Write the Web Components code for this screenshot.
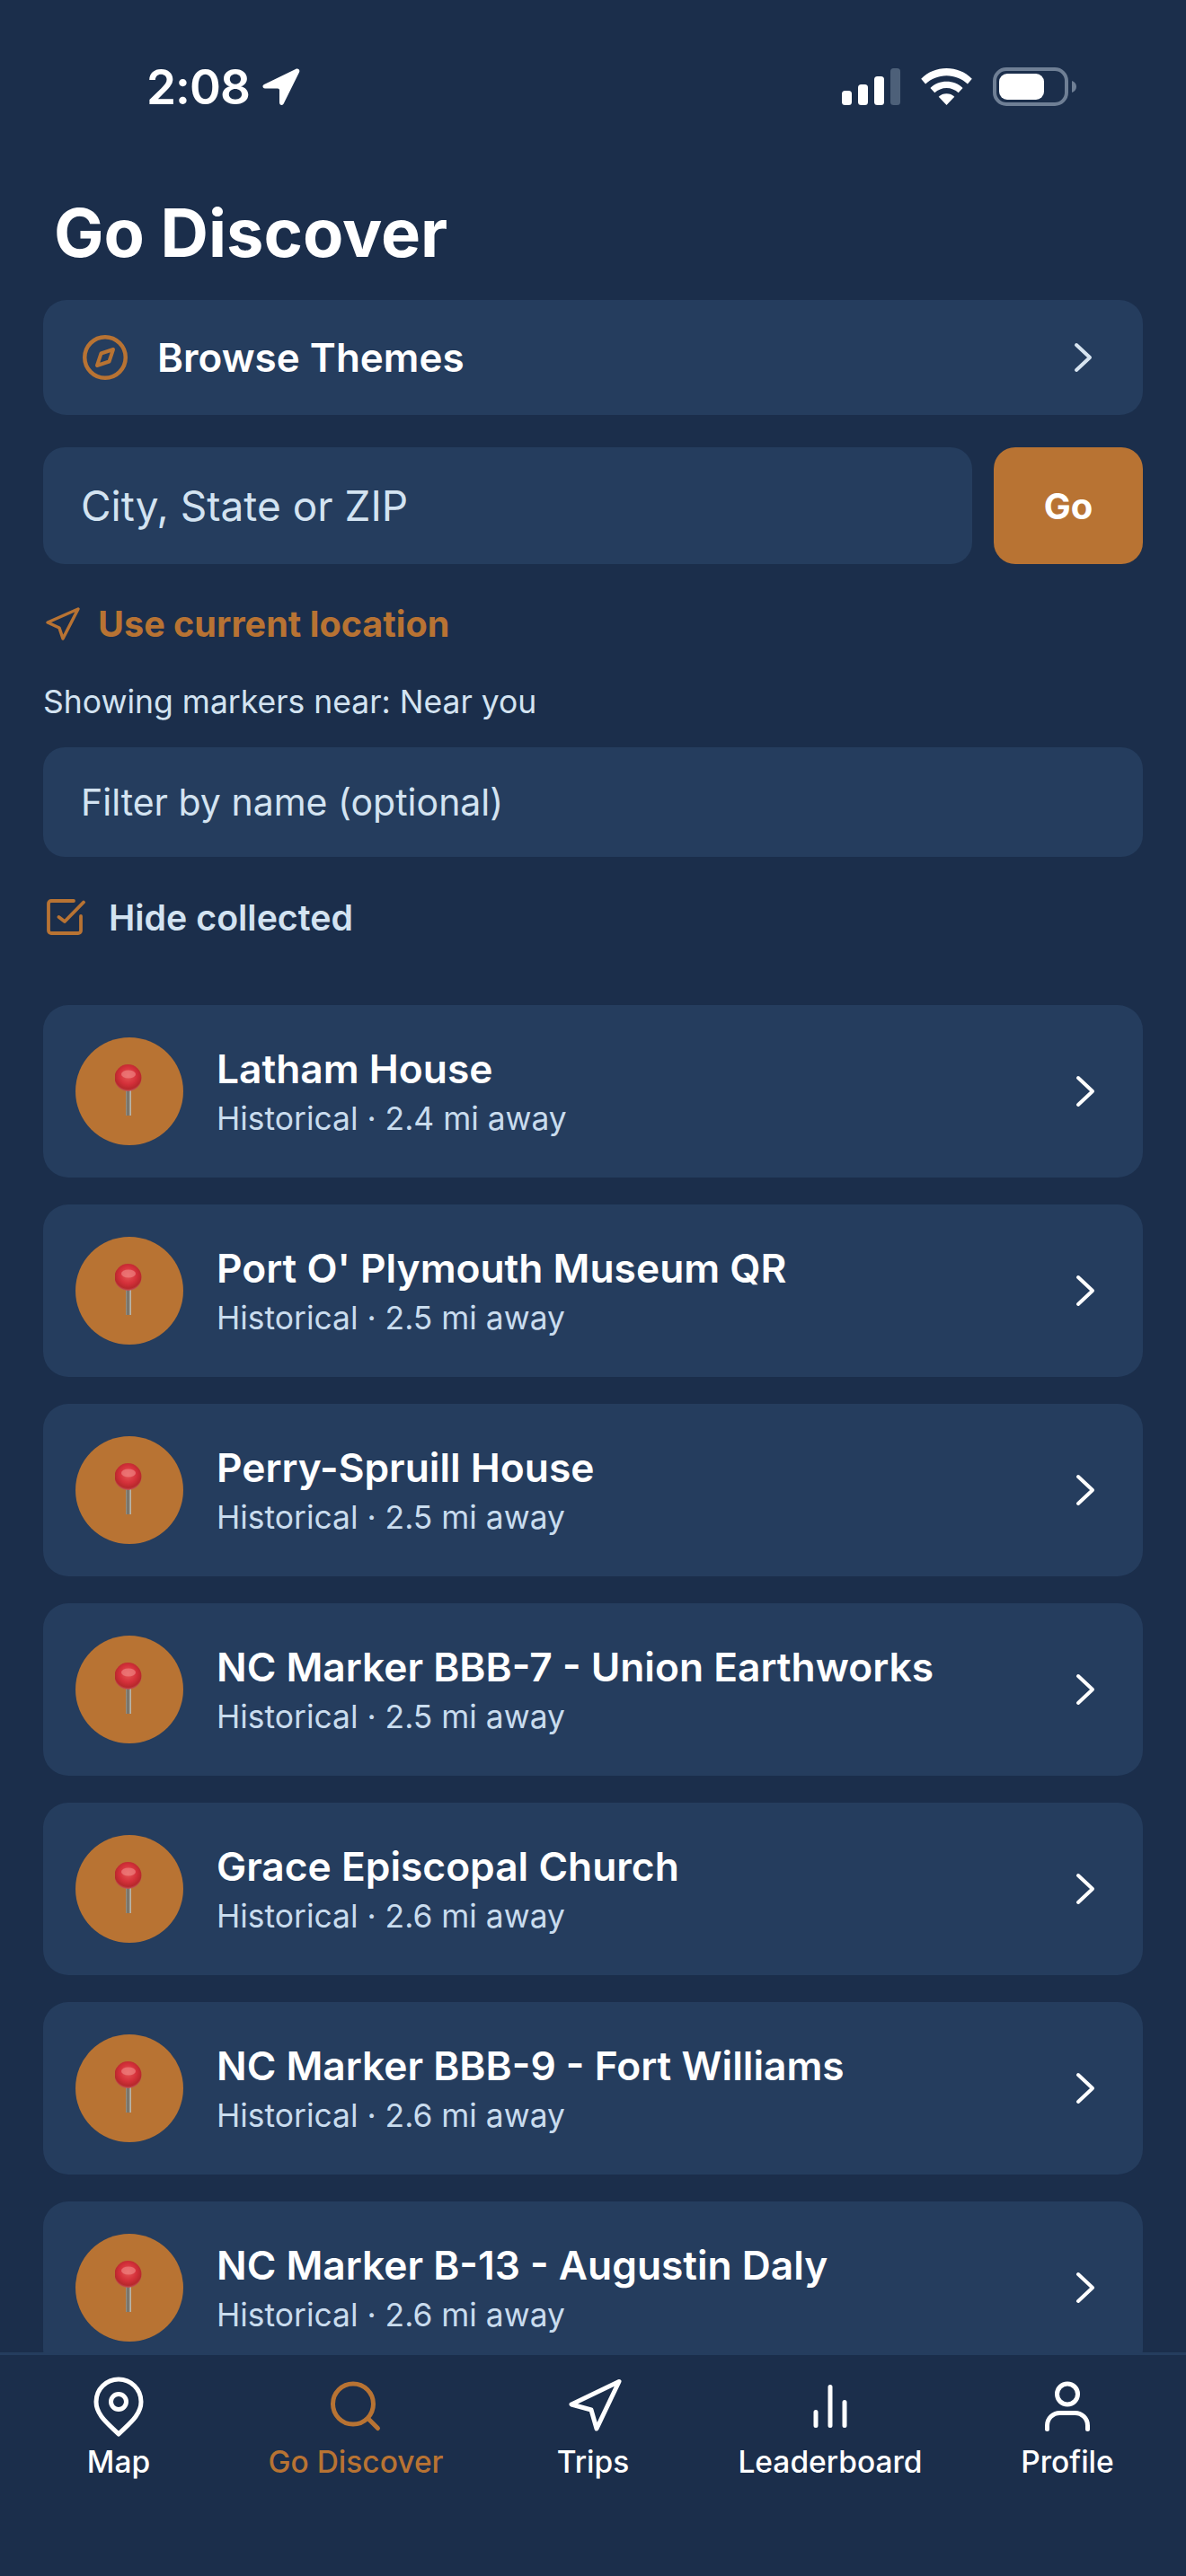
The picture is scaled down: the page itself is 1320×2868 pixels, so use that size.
<!DOCTYPE html>
<html>
<head>
<meta charset="utf-8">
<title>Go Discover</title>
<style>
  html, body { margin: 0; padding: 0; background: #1b2e4b; }
  body { font-family: Inter, "Liberation Sans", sans-serif; color: #fff; }
</style>
</head>
<body>
<discover-app></discover-app>

<script>
const ORANGE = '#b87333';

class StatusBar extends HTMLElement {
  constructor() {
    super();
    this.attachShadow({ mode: 'open' });
    this.shadowRoot.innerHTML = `<style>
      :host { display: flex; flex: none; align-items: center; justify-content: space-between; height: 111px; padding: 41px 122px 0 163px; }
      .time { display: flex; align-items: center; gap: 14px; font-size: 53px; font-weight: 600; line-height: 56px; letter-spacing: -1px; }
      .right { display: flex; align-items: center; gap: 23px; }
      svg { display: block; }
    </style>
    <div class="time"><span>2:08</span>
      <svg width="42" height="42" viewBox="0 0 42 42"><path d="M37 1 2 18c-2.500 1.200-1.800 4.500 1 4.500h14c1.300 0 2 .7 2 2V38c0 3.400 3.500 4 4.800 1.200L41 4.500C42.300 1.700 39.800-.3 37 1z" fill="#fff"/></svg>
    </div>
    <div class="right">
      <svg width="65" height="41" viewBox="0 0 65 41">
        <rect x="0" y="25" width="11" height="16" rx="3.500" fill="#fff"/>
        <rect x="18" y="18" width="11" height="23" rx="3.500" fill="#fff"/>
        <rect x="36" y="9" width="11" height="32" rx="3.500" fill="#fff"/>
        <rect x="54" y="0" width="11" height="41" rx="3.500" fill="#4d6079"/>
      </svg>
      <svg width="57" height="41" viewBox="0 0 58 42" fill="#fff">
        <path d="M29 0C18 0 8 4 0 12l5 6c6.500-6 15-9.500 24-9.500S46.500 12 53 18l5-6C50 4 40 0 29 0z"/>
        <path d="M29 15c-7 0-13.500 2.500-18.500 7.500l5 5.500C19 24.500 24 22.500 29 22.500s10 2 13.500 5.500l5-5.500C42.500 17.500 36 15 29 15z"/>
        <path d="M29 29c-3.500 0-6.500 1.200-9 3.500L29 42l9-9.500c-2.500-2.300-5.500-3.500-9-3.500z"/>
      </svg>
      <svg width="93" height="43" viewBox="0 0 93 43">
        <rect x="2" y="2" width="80" height="39" rx="13" fill="none" stroke="#6f7f95" stroke-width="4"/>
        <rect x="7" y="7" width="50" height="29" rx="9" fill="#fff"/>
        <path d="M88 15c3 1 5 3.500 5 6.500s-2 5.500-5 6.500z" fill="#6f7f95"/>
      </svg>
    </div>`;
  }
}

class BrowseRow extends HTMLElement {
  constructor() {
    super();
    this.attachShadow({ mode: 'open' });
    this.shadowRoot.innerHTML = `<style>
      :host { display: flex; align-items: center; height: 128px; padding: 0 54px 0 44px; background: var(--card); border-radius: 26px; }
      .label { flex: 1; margin-left: 33px; font-size: 44px; font-weight: 600; }
      svg { display: block; }
    </style>
    <svg width="50" height="50" viewBox="0 0 50 50" fill="none" stroke="${ORANGE}" stroke-width="4.500" stroke-linejoin="round">
      <circle cx="25" cy="25" r="22.750"/>
      <path d="M34 16 20.500 20.500 16 34l13.500-4.500z" stroke-width="4"/>
    </svg>
    <span class="label"><slot></slot></span>
    <svg width="24" height="34" viewBox="0 0 24 34" fill="none" stroke="#d7e4f0" stroke-width="4" stroke-linecap="round" stroke-linejoin="round"><path d="M4 3l15 14L4 31"/></svg>`;
  }
}

class TextField extends HTMLElement {
  constructor() {
    super();
    this.attachShadow({ mode: 'open' });
    this.shadowRoot.innerHTML = `<style>
      :host { display: flex; align-items: center; box-sizing: border-box; padding: 0 42px; background: var(--card); border-radius: 24px; color: #d3e3f1; font-size: 46px; }
    </style><slot></slot>`;
  }
}

class GoButton extends HTMLElement {
  constructor() {
    super();
    this.attachShadow({ mode: 'open' });
    this.shadowRoot.innerHTML = `<style>
      :host { display: flex; align-items: center; justify-content: center; background: ${ORANGE}; border-radius: 24px; font-size: 40px; font-weight: 700; color: #fff; }
    </style><slot></slot>`;
  }
}

class LocationLink extends HTMLElement {
  constructor() {
    super();
    this.attachShadow({ mode: 'open' });
    this.shadowRoot.innerHTML = `<style>
      :host { display: flex; align-items: center; gap: 19px; padding-left: 2px; color: ${ORANGE}; font-size: 39.600px; line-height: 48px; font-weight: 700; }
      svg { display: block; }
    </style>
    <svg width="40" height="40" viewBox="0 0 40 40" fill="none" stroke="${ORANGE}" stroke-width="3.500" stroke-linejoin="round" stroke-linecap="round"><path d="M37 3 3 18l13 6 4 12z"/></svg>
    <span><slot></slot></span>`;
  }
}

class HideToggle extends HTMLElement {
  constructor() {
    super();
    this.attachShadow({ mode: 'open' });
    this.shadowRoot.innerHTML = `<style>
      :host { display: flex; align-items: center; gap: 25px; padding-left: 4px; color: #d3e3f1; font-size: 39.300px; line-height: 47px; font-weight: 600; }
      svg { display: block; }
    </style>
    <svg width="44" height="42" viewBox="0 0 44 42" fill="none" stroke="${ORANGE}" stroke-width="3.800" stroke-linecap="round" stroke-linejoin="round">
      <path d="M38 19v16a3 3 0 0 1-3 3H5a3 3 0 0 1-3-3V5a3 3 0 0 1 3-3h25"/>
      <path d="M13.500 20l6.500 5L41 3.500"/>
    </svg>
    <span><slot></slot></span>`;
  }
}

class MarkerRow extends HTMLElement {
  constructor() {
    super();
    this.attachShadow({ mode: 'open' });
    const id = 'ball' + Math.random().toString(36).slice(2, 7);
    this.shadowRoot.innerHTML = `<style>
      :host { display: flex; align-items: center; flex: none; height: 192px; padding: 0 50px 0 36px; background: var(--card); border-radius: 28px; }
      .badge { flex: none; display: flex; align-items: center; justify-content: center; width: 120px; height: 120px; border-radius: 50%; background: ${ORANGE}; }
      .text { flex: 1; margin-left: 37px; }
      .name { font-size: 44.300px; font-weight: 600; line-height: 54px; color: #fff; }
      .sub { margin-top: 8px; font-size: 35.400px; line-height: 42px; color: #c9dcee; }
      svg { display: block; }
    </style>
    <div class="badge">
      <svg width="32" height="60" viewBox="0 0 32 60">
        <defs>
          <radialGradient id="${id}" cx=".5" cy=".42" r=".58">
            <stop offset="0" stop-color="#e65656"/>
            <stop offset=".55" stop-color="#d4303a"/>
            <stop offset=".85" stop-color="#b8282c"/>
            <stop offset="1" stop-color="#c4565a"/>
          </radialGradient>
          <linearGradient id="${id}s" x1="0" x2="1" y1="0" y2="0">
            <stop offset="0" stop-color="#9a9488"/>
            <stop offset=".45" stop-color="#6e695f"/>
            <stop offset="1" stop-color="#c9c3b5"/>
          </linearGradient>
        </defs>
        <rect x="12" y="28" width="6" height="29" fill="url(#${id}s)"/>
        <circle cx="14.500" cy="15" r="15" fill="url(#${id})"/>
        <ellipse cx="15" cy="11" rx="8" ry="4.500" fill="#f08684" opacity=".65"/>
      </svg>
    </div>
    <div class="text">
      <div class="name"><slot name="name"></slot></div>
      <div class="sub"><slot name="sub"></slot></div>
    </div>
    <svg width="26" height="36" viewBox="0 0 26 36" fill="none" stroke="#fff" stroke-width="4" stroke-linecap="round" stroke-linejoin="round"><path d="M4 3l16 15L4 33"/></svg>`;
  }
}

const TAB_ICONS = {
  map: '<path d="M61 30c0 15-14 25-25 36-11-11-25-21-25-36a25 25 0 0 1 50 0z"/><circle cx="36" cy="30" r="8.500"/>',
  search: '<circle cx="33" cy="32.500" r="22.500"/><path d="M50 49l10.500 10.500"/>',
  trips: '<path d="M65 7.500 12 33l22 6 6 21z"/>',
  board: '<path d="M20 41.500v15M36 13.500v43M52 30.500v26"/>',
  profile: '<circle cx="36" cy="21.500" r="11.500"/><path d="M13.500 60.500v-4a14 14 0 0 1 14-14h17a14 14 0 0 1 14 14v4"/>'
};

class TabItem extends HTMLElement {
  constructor() {
    super();
    this.attachShadow({ mode: 'open' });
    const active = this.hasAttribute('active');
    const colour = active ? ORANGE : '#fff';
    this.shadowRoot.innerHTML = `<style>
      :host { display: flex; flex-direction: column; align-items: center; flex: 1; color: ${colour}; font-size: 33.500px; line-height: 40px; font-weight: 500; }
      svg { display: block; margin-bottom: 5px; }
    </style>
    <svg width="72" height="72" viewBox="0 0 72 72" fill="none" stroke="${colour}" stroke-width="5" stroke-linecap="round" stroke-linejoin="round">${TAB_ICONS[this.getAttribute('icon')]}</svg>
    <slot></slot>`;
  }
}

class TabBar extends HTMLElement {
  constructor() {
    super();
    this.attachShadow({ mode: 'open' });
    this.shadowRoot.innerHTML = `<style>
      :host { display: flex; flex: none; box-sizing: border-box; height: 249px; padding: 22px 0 0; background: #1b2e4b; border-top: 3px solid #253d5e; }
    </style><slot></slot>`;
  }
}

class DiscoverApp extends HTMLElement {
  constructor() {
    super();
    this.attachShadow({ mode: 'open' });
    const markers = [
      ['Latham House', '2.4'],
      ["Port O' Plymouth Museum QR", '2.5'],
      ['Perry-Spruill House', '2.5'],
      ['NC Marker BBB-7 - Union Earthworks', '2.5'],
      ['Grace Episcopal Church', '2.6'],
      ['NC Marker BBB-9 - Fort Williams', '2.6'],
      ['NC Marker B-13 - Augustin Daly', '2.6']
    ];
    const rows = markers.map(m => `<marker-row>
        <span slot="name">${m[0]}</span>
        <span slot="sub">Historical · ${m[1]} mi away</span>
      </marker-row>`).join('');
    this.shadowRoot.innerHTML = `<style>
      :host { display: flex; flex-direction: column; width: 1320px; height: 2868px; overflow: hidden; --card: #253d5e; background: #1b2e4b; }
      main { flex: 1; min-height: 0; overflow: hidden; display: flex; flex-direction: column; padding: 0 48px; }
      main > * { flex: none; }
      h1 { margin: 62px 0 0 12px; font-size: 74px; line-height: 90px; font-weight: 700; }
      browse-row { margin-top: 30px; }
      .search { display: flex; gap: 24px; margin-top: 36px; height: 130px; }
      .search text-field { flex: 1; }
      .search go-button { width: 166px; }
      location-link { margin-top: 43px; }
      .near { margin-top: 39px; font-size: 35.500px; line-height: 48px; color: #d3e3f1; }
      .filter { margin-top: 26px; height: 122px; font-size: 41px; }
      hide-toggle { margin-top: 44px; }
      .list { display: flex; flex-direction: column; gap: 30px; margin-top: 74px; }
    </style>
    <status-bar></status-bar>
    <main>
      <h1>Go Discover</h1>
      <browse-row>Browse Themes</browse-row>
      <div class="search">
        <text-field>City, State or ZIP</text-field>
        <go-button>Go</go-button>
      </div>
      <location-link>Use current location</location-link>
      <div class="near">Showing markers near: Near you</div>
      <text-field class="filter">Filter by name (optional)</text-field>
      <hide-toggle>Hide collected</hide-toggle>
      <div class="list">${rows}</div>
    </main>
    <tab-bar>
      <tab-item icon="map">Map</tab-item>
      <tab-item icon="search" active>Go Discover</tab-item>
      <tab-item icon="trips">Trips</tab-item>
      <tab-item icon="board">Leaderboard</tab-item>
      <tab-item icon="profile">Profile</tab-item>
    </tab-bar>`;
  }
}

customElements.define('status-bar', StatusBar);
customElements.define('browse-row', BrowseRow);
customElements.define('text-field', TextField);
customElements.define('go-button', GoButton);
customElements.define('location-link', LocationLink);
customElements.define('hide-toggle', HideToggle);
customElements.define('marker-row', MarkerRow);
customElements.define('tab-item', TabItem);
customElements.define('tab-bar', TabBar);
customElements.define('discover-app', DiscoverApp);
</script>
</body>
</html>
